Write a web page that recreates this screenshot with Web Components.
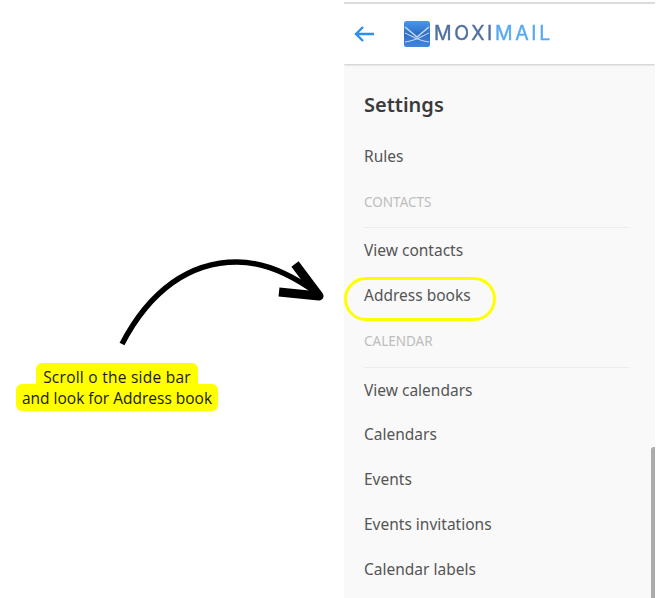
<!DOCTYPE html>
<html>
<head>
<meta charset="utf-8">
<title>Address books</title>
<style>
  html, body { margin: 0; height: 598px; overflow: hidden; background: #fff; }
</style>
</head>
<body>
<guide-page>
  <guide-note slot="note">
    <span>Scroll o the side bar</span>
    <span>and look for Address book</span>
  </guide-note>
  <app-header slot="panel"></app-header>
  <settings-nav slot="panel">
    <nav-item>Rules</nav-item>
    <nav-section>CONTACTS</nav-section>
    <nav-item>View contacts</nav-item>
    <nav-item marked>Address books</nav-item>
    <nav-section>CALENDAR</nav-section>
    <nav-item>View calendars</nav-item>
    <nav-item>Calendars</nav-item>
    <nav-item>Events</nav-item>
    <nav-item>Events invitations</nav-item>
    <nav-item>Calendar labels</nav-item>
  </settings-nav>
</guide-page>

<script>
class GuidePage extends HTMLElement {
  constructor() {
    super();
    this.attachShadow({mode: 'open'}).innerHTML = `
      <style>
        :host { display: grid; grid-template-columns: 344px 311px; height: 598px; overflow: hidden; }
        .panel { display: flex; flex-direction: column; height: 598px; overflow: hidden; filter: blur(0.3px); }
      </style>
      <div><slot name="note"></slot></div>
      <div class="panel"><slot name="panel"></slot></div>
    `;
  }
}

class GuideNote extends HTMLElement {
  constructor() {
    super();
    this.attachShadow({mode: 'open'}).innerHTML = `
      <style>
        :host { display: block; padding-top: 258px; }
        svg { display: block; margin-left: 115px; }
        .label {
          display: flex;
          flex-direction: column;
          align-items: center;
          width: 202px;
          margin-left: 16px;
          font: 15.5px/21px "Open Sans", sans-serif;
          color: #1a1a00;
        }
        ::slotted(span) {
          display: block;
          background: #ffff00;
          border-radius: 6px;
          padding: 4px 6px 2px;
          white-space: nowrap;
        }
        ::slotted(span:first-child) { padding: 4px 7px 2px; letter-spacing: 0.25px; }
        ::slotted(span:last-child) { margin-top: -6px; }
      </style>
      <svg width="210" height="105" viewBox="115 258 210 105">
        <path d="M122 344 C150 290 190 262 237 262 C268 262 295 277 318 294" fill="none" stroke="#000" stroke-width="5.5"/>
        <path d="M295 264 L319 296 L279 292" fill="none" stroke="#000" stroke-width="9" stroke-linejoin="round" stroke-linecap="butt"/>
      </svg>
      <div class="label"><slot></slot></div>
    `;
  }
}

class AppHeader extends HTMLElement {
  constructor() {
    super();
    this.attachShadow({mode: 'open'}).innerHTML = `
      <style>
        :host {
          display: flex;
          align-items: center;
          box-sizing: border-box;
          height: 62px;
          margin-top: 2px;
          padding: 0 0 1px 10px;
          background: #fff;
          border-top: 2px solid #dcdcdc;
          box-shadow: 0 1px 2px rgba(0, 0, 0, 0.2);
          position: relative;
          z-index: 1;
        }
        .back { display: block; margin-right: 30px; }
        .mark { display: block; margin-right: 4px; }
        .name {
          font: 400 19.5px/1 "Inter", "Liberation Sans", sans-serif;
          letter-spacing: 2.65px;
          color: #4f6f9f;
          -webkit-text-stroke: 0.4px currentColor;
        }
        .name b { font-weight: 400; color: #58a9f2; }
      </style>
      <svg class="back" width="20" height="18" viewBox="0 0 20 18">
        <path d="M20 9H2M9 2L2 9L9 16" fill="none" stroke="#2f8ef0" stroke-width="2.4"/>
      </svg>
      <svg class="mark" width="26" height="26" viewBox="0 0 26 26">
        <defs>
          <linearGradient id="body" x1="0" y1="0" x2="0" y2="1">
            <stop offset="0" stop-color="#4b97ec"/>
            <stop offset="0.5" stop-color="#2f6ec8"/>
            <stop offset="1" stop-color="#4286e0"/>
          </linearGradient>
        </defs>
        <rect width="26" height="26" rx="2.5" fill="url(#body)"/>
        <path d="M1 6L13 16L25 6" fill="none" stroke="#c4d8f4" stroke-width="1.6"/>
        <path d="M1 12C8 15 14 20 25 21M25 12C18 15 12 20 1 21" fill="none" stroke="#c4d8f4" stroke-width="1.1"/>
      </svg>
      <span class="name">MOXI<b>MAIL</b></span>
    `;
  }
}

class SettingsNav extends HTMLElement {
  constructor() {
    super();
    this.attachShadow({mode: 'open'}).innerHTML = `
      <style>
        :host {
          display: block;
          flex: 1;
          position: relative;
          padding: 0 26px 0 20px;
          background: #f9f9f9;
          font-family: "Noto Sans", sans-serif;
        }
        h2 {
          margin: 0;
          height: 70px;
          font-size: 20px;
          font-weight: 600;
          line-height: 82px;
          color: #3b3b3b;
        }
        .thumb {
          position: absolute;
          right: 0;
          bottom: 0;
          width: 4px;
          height: 151px;
          background: #ababab;
          border-radius: 3px 0 0 0;
        }
      </style>
      <h2>Settings</h2>
      <slot></slot>
      <div class="thumb"></div>
    `;
  }
}

class NavItem extends HTMLElement {
  constructor() {
    super();
    this.attachShadow({mode: 'open'}).innerHTML = `
      <style>
        :host {
          display: block;
          position: relative;
          height: 44.8px;
          font-size: 15.5px;
          line-height: 44.8px;
          color: #555;
        }
        .ring {
          display: none;
          position: absolute;
          left: -20px;
          top: 4px;
          width: 152px;
          height: 44px;
          box-sizing: border-box;
          border: 3px solid #ffff00;
          border-radius: 22px;
        }
        :host([marked]) .ring { display: block; }
      </style>
      <slot></slot>
      <div class="ring"></div>
    `;
  }
}

class NavSection extends HTMLElement {
  constructor() {
    super();
    this.attachShadow({mode: 'open'}).innerHTML = `
      <style>
        :host {
          display: block;
          box-sizing: border-box;
          height: 49.6px;
          border-bottom: 1px solid #ececec;
          font-size: 13.5px;
          line-height: 47px;
          color: #bdbdbd;
        }
      </style>
      <slot></slot>
    `;
  }
}

customElements.define('guide-page', GuidePage);
customElements.define('guide-note', GuideNote);
customElements.define('app-header', AppHeader);
customElements.define('settings-nav', SettingsNav);
customElements.define('nav-item', NavItem);
customElements.define('nav-section', NavSection);
</script>
</body>
</html>
